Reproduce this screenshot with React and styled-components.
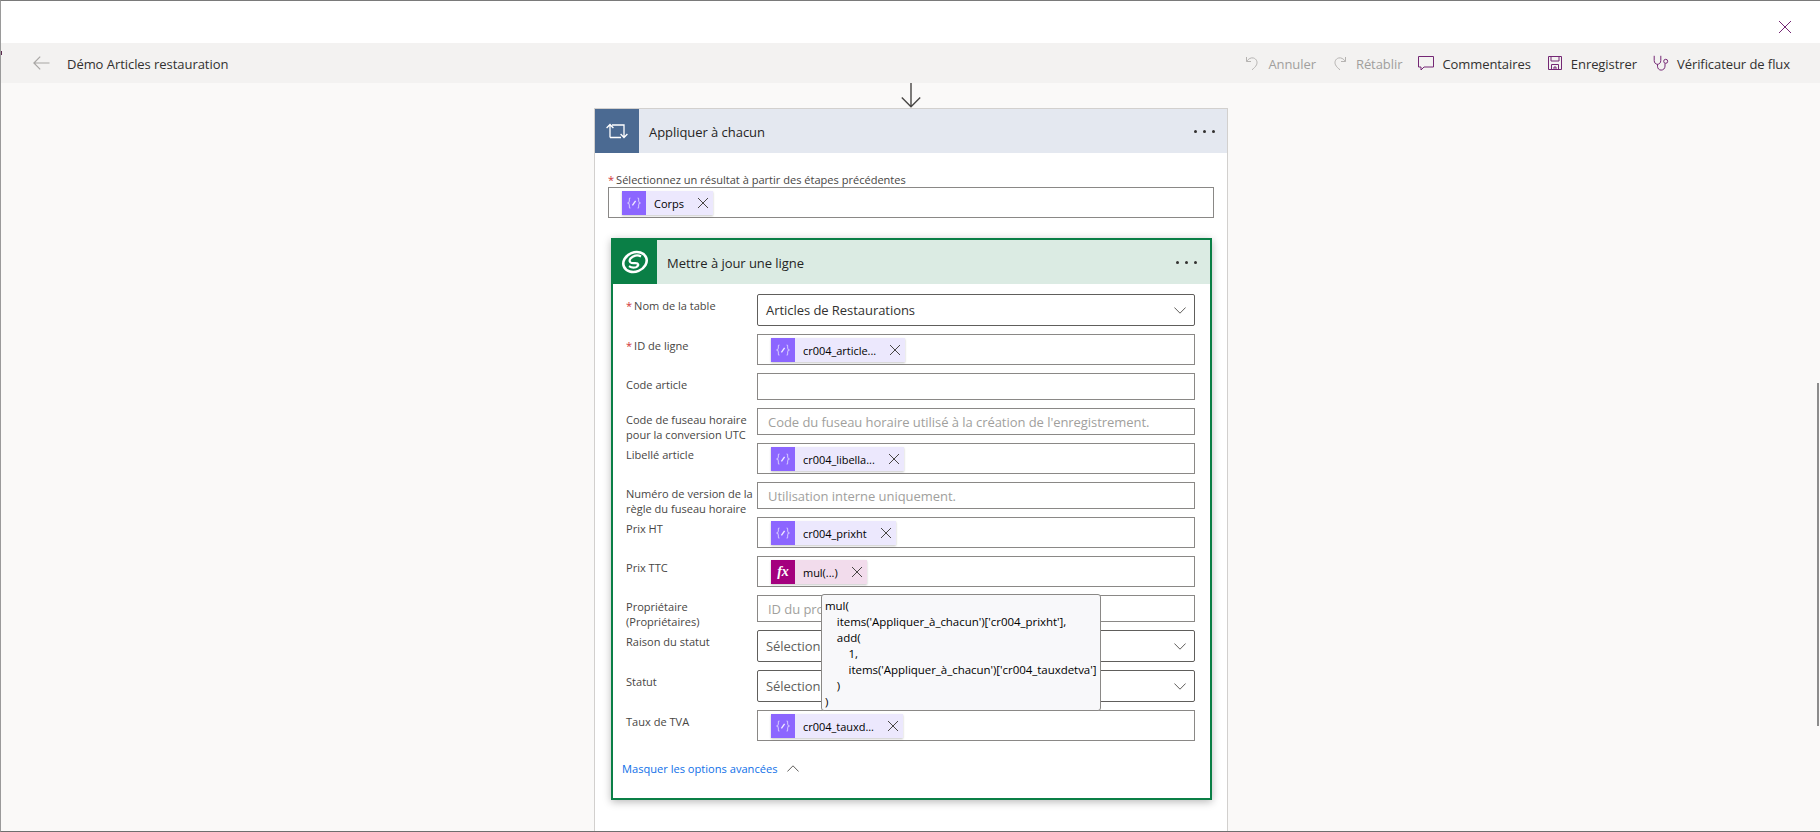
import React from 'react';
import styled, { createGlobalStyle } from 'styled-components';

const FONT = `"Open Sans", "Noto Sans", "Liberation Sans", sans-serif`;

const Global = createGlobalStyle`
  html, body { margin: 0; padding: 0; height: 100%; overflow: hidden; background: #faf9f8; }
  * { box-sizing: border-box; }
  body { font-family: ${FONT}; }
`;

const Frame = styled.div`
  position: relative;
  width: 1820px;
  height: 832px;
  display: flex;
  flex-direction: column;
  border-top: 1px solid #7a7a7a;
  border-left: 1px solid #9a9a9a;
  border-bottom: 1px solid #6e6e6e;
  background: #faf9f8;
  overflow: hidden;
`;
const CloseRow = styled.div`
  height: 42px;
  flex: none;
  background: #fff;
  display: flex;
  justify-content: flex-end;
  align-items: center;
  padding: 10px 29px 0 0;
`;
const EdgeMark = styled.span`
  position: absolute;
  left: -1px;
  top: 50px;
  width: 2px;
  height: 4px;
  background: #5b2a4e;
`;
const Toolbar = styled.header`
  height: 40px;
  flex: none;
  background: #f3f2f1;
  display: flex;
  align-items: center;
  justify-content: space-between;
  padding: 0 30px 0 32px;
`;
const ToolLeft = styled.div`
  display: flex;
  align-items: center;
  gap: 17px;
`;
const FlowTitle = styled.span`
  font-size: 13px;
  letter-spacing: -0.05px;
  color: #323130;
  padding-top: 2px;
`;
const ToolRight = styled.div`
  display: flex;
  align-items: center;
  gap: 16px;
`;
const ToolButton = styled.div`
  display: flex;
  align-items: center;
  gap: 8px;
  font-size: 13px;
  letter-spacing: -0.07px;
  color: ${p => (p.$disabled ? '#a19f9d' : '#323130')};
  & > span { padding-top: 2px; }
`;
const Canvas = styled.main`
  position: relative;
  flex: 1;
  min-height: 0;
  display: flex;
  flex-direction: column;
  align-items: center;
  background: #faf9f8;
  overflow: hidden;
  padding-left: 1px;
`;
const ScrollThumb = styled.div`
  position: absolute;
  right: 1px;
  top: 300px;
  width: 2px;
  height: 343px;
  background: #8c8c8c;
`;
const DownArrow = styled.svg`
  flex: none;
  display: block;
`;
const LoopCard = styled.section`
  width: 634px;
  flex: 1;
  background: #fff;
  border: 1px solid #d2d0ce;
  border-bottom: 0;
`;
const CardHeader = styled.div`
  height: 44px;
  display: flex;
  align-items: center;
  background: ${p => p.$bg};
`;
const CardIcon = styled.div`
  width: 44px;
  height: 44px;
  flex: none;
  display: flex;
  align-items: center;
  justify-content: center;
  background: ${p => p.$bg};
`;
const CardTitle = styled.div`
  flex: 1;
  padding: 2px 0 0 10px;
  font-size: 13px;
  letter-spacing: -0.05px;
  color: #252423;
`;
const MoreDots = styled.div`
  display: flex;
  gap: 6px;
  margin-right: ${p => p.$right}px;
  & > i { width: 3px; height: 3px; border-radius: 50%; background: #323130; display: block; }
`;
const LoopBody = styled.div`
  padding: 19px 13px 0 13px;
`;
const TopLabel = styled.div`
  font-size: 11.05px;
  line-height: 15px;
  height: 15px;
  color: #484644;
  white-space: nowrap;
`;
const Star = styled.span`
  color: #d13438;
  margin-right: 2px;
`;
const TokenBox = styled.div`
  height: 31px;
  border: 1px solid #8a8886;
  background: #fff;
  display: flex;
  align-items: center;
  padding: 1px 0 0 13px;
`;
const Chip = styled.div`
  height: 24px;
  display: flex;
  align-items: center;
  background: ${p => p.$bg};
  box-shadow: 0 1px 2px rgba(0, 0, 0, 0.22);
  padding-right: 5px;
`;
const ChipIcon = styled.div`
  width: 24px;
  height: 24px;
  flex: none;
  display: flex;
  align-items: center;
  justify-content: center;
  background: ${p => p.$bg};
`;
const FxMark = styled.span`
  font-family: "Liberation Serif", serif;
  font-style: italic;
  font-weight: 700;
  font-size: 14px;
  color: #fff;
`;
const ChipText = styled.span`
  margin: 0 14px 0 8px;
  font-size: 11px;
  letter-spacing: -0.03px;
  color: #000;
  white-space: nowrap;
`;
const ActionCard = styled.section`
  margin: 20px 2px 0 3px;
  border: 2px solid #0a7f46;
  background: #fff;
  box-shadow: 0 2px 8px rgba(0, 0, 0, 0.28);
`;
const Fields = styled.div`
  padding: 10px 15px 0 13px;
  display: flex;
  flex-direction: column;
  gap: 8px;
`;
const Row = styled.div`
  position: relative;
  display: flex;
  height: ${p => p.$h}px;
`;
const FieldLabel = styled.div`
  width: 131px;
  flex: none;
  padding-top: 4px;
  font-size: 11.05px;
  line-height: 15px;
  color: #484644;
  white-space: pre;
`;
const FieldControl = styled.div`
  flex: 1;
  min-width: 0;
`;
const TextBox = styled.div`
  height: 100%;
  border: 1px solid #8a8886;
  background: #fff;
  display: flex;
  align-items: center;
  padding-left: 10px;
  font-size: 13px;
  letter-spacing: -0.05px;
  color: #a19f9d;
  white-space: nowrap;
  overflow: hidden;
`;
const Dropdown = styled.div`
  height: 100%;
  border: 1px solid #605e5c;
  border-radius: 2px;
  background: #fff;
  display: flex;
  align-items: center;
  justify-content: space-between;
  padding: 0 8px 0 8px;
  font-size: 13px;
  letter-spacing: -0.05px;
  color: ${p => (p.$muted ? '#605e5c' : '#323130')};
`;
const Tooltip = styled.pre`
  position: absolute;
  z-index: 3;
  left: 195px;
  top: 38px;
  width: 280px;
  height: 117px;
  margin: 0;
  padding: 3px 0 0 3px;
  background: #f8f8fa;
  border: 1px solid #8a8886;
  border-radius: 3px;
  font-family: ${FONT};
  font-size: 11.5px;
  letter-spacing: -0.04px;
  line-height: 16px;
  color: #000;
  overflow: hidden;
`;
const Advanced = styled.div`
  height: 57px;
  display: flex;
  align-items: center;
  gap: 10px;
  padding: 0 0 3px 9px;
  font-size: 11.1px;
  color: #0f6fe8;
`;

const Stroke = ({ size = 16, color = '#742774', w = 1, children }) => (
  <svg width={size} height={size} viewBox="0 0 16 16" fill="none" stroke={color} strokeWidth={w}>
    {children}
  </svg>
);

const VarIcon = () => (
  <svg width="14" height="12" viewBox="0 0 14 12" fill="none" stroke="#cfc0ff" strokeWidth="1.1">
    <path d="M3.5 1C2 1 2.4 2.2 2.4 3.6 2.4 5 2 5.6 1 6c1 .4 1.4 1 1.4 2.4C2.4 9.8 2 11 3.5 11" />
    <path d="M10.5 1c1.5 0 1.1 1.2 1.1 2.6 0 1.4.4 2 1.4 2.4-1 .4-1.4 1-1.4 2.4 0 1.4.4 2.6-1.1 2.6" />
    <path d="M5.4 8.4 8.6 3.8" stroke="#f0eaff" strokeWidth="1.4" />
  </svg>
);
const Dismiss = () => (
  <svg width="10" height="10" viewBox="0 0 10 10" stroke="#484644" strokeWidth="1" style={{ flex: 'none' }}>
    <path d="M0 0l10 10M10 0L0 10" />
  </svg>
);
const Chevron = ({ up }) => (
  <svg width="12" height="7" viewBox="0 0 12 7" fill="none" stroke="#605e5c" strokeWidth="1">
    <path d={up ? 'M.4 6.5 6 .8l5.6 5.7' : 'M.4.5 6 6.2 11.6.5'} />
  </svg>
);
const Dots = ({ right }) => (
  <MoreDots $right={right}>
    <i />
    <i />
    <i />
  </MoreDots>
);

const Token = ({ text, fx }) => (
  <Chip $bg={fx ? '#f2dcec' : '#ece8fd'}>
    <ChipIcon $bg={fx ? '#a4007e' : '#8c66ff'}>{fx ? <FxMark>fx</FxMark> : <VarIcon />}</ChipIcon>
    <ChipText>{text}</ChipText>
    <Dismiss />
  </Chip>
);

const fields = [
  { label: 'Nom de la table', req: true, h: 32, select: 'Articles de Restaurations' },
  { label: 'ID de ligne', req: true, h: 31, token: 'cr004_article...' },
  { label: 'Code article', h: 27, text: '' },
  { label: 'Code de fuseau horaire\npour la conversion UTC', h: 27, text: "Code du fuseau horaire utilisé à la création de l'enregistrement." },
  { label: 'Libellé article', h: 31, token: 'cr004_libella...' },
  { label: 'Numéro de version de la\nrègle du fuseau horaire', h: 27, text: 'Utilisation interne uniquement.' },
  { label: 'Prix HT', h: 31, token: 'cr004_prixht' },
  { label: 'Prix TTC', h: 31, token: 'mul(...)', fx: true, tip: true },
  { label: 'Propriétaire\n(Propriétaires)', h: 27, text: 'ID du propriétaire' },
  { label: 'Raison du statut', h: 32, select: 'Sélectionner une valeur', muted: true },
  { label: 'Statut', h: 32, select: 'Sélectionner une valeur', muted: true },
  { label: 'Taux de TVA', h: 31, token: 'cr004_tauxd...' },
];

const formula = `mul(
    items('Appliquer_à_chacun')['cr004_prixht'],
    add(
        1,
        items('Appliquer_à_chacun')['cr004_tauxdetva']
    )
)`;

export default function App() {
  return (
    <Frame>
      <Global />
      <EdgeMark />
      <CloseRow>
        <svg width="12" height="12" viewBox="0 0 12 12" stroke="#742774" strokeWidth="1">
          <path d="M0 0l12 12M12 0L0 12" />
        </svg>
      </CloseRow>
      <Toolbar>
        <ToolLeft>
          <svg width="17" height="14" viewBox="0 0 17 14" fill="none" stroke="#a8a6a4" strokeWidth="1.2">
            <path d="M16.5 7H1M7.2.7 .9 7l6.3 6.3" />
          </svg>
          <FlowTitle>Démo Articles restauration</FlowTitle>
        </ToolLeft>
        <ToolRight>
          <ToolButton $disabled>
            <Stroke color="#b5b3b1">
              <path d="M2.5 2v4.5H7" />
              <path d="M2.6 6.3 C4.5 3.8 7 2.3 9.5 3 c3 .9 4.3 4 3 6.8-.9 2-2.8 3.6-4.5 5" />
            </Stroke>
            <span>Annuler</span>
          </ToolButton>
          <ToolButton $disabled>
            <Stroke color="#b5b3b1">
              <path d="M13.5 2v4.5H9" />
              <path d="M13.4 6.3 C11.5 3.8 9 2.3 6.5 3 c-3 .9-4.3 4-3 6.8.9 2 2.8 3.6 4.5 5" />
            </Stroke>
            <span>Rétablir</span>
          </ToolButton>
          <ToolButton>
            <Stroke>
              <path d="M.5 1.5h15v10.5H6l-3 3v-3H.5z" />
            </Stroke>
            <span>Commentaires</span>
          </ToolButton>
          <ToolButton>
            <Stroke>
              <path d="M1.5 1.5h13v13h-13z" />
              <path d="M4 1.5v4.5h8V1.5M4.5 14.5V9.5h7v5M7 14.5v-2.5h2v2.5" />
            </Stroke>
            <span>Enregistrer</span>
          </ToolButton>
          <ToolButton>
            <Stroke>
              <path d="M1.2 .8v4.7c0 2.3 1.5 3.8 3.3 3.8s3.3-1.5 3.3-3.8V.8" />
              <path d="M4.5 9.3v1.9c0 2.3 1.5 3.9 3.6 3.9 2.2 0 3.9-1.6 3.9-4V8.4" />
              <circle cx="12.7" cy="6.3" r="2" />
            </Stroke>
            <span>Vérificateur de flux</span>
          </ToolButton>
        </ToolRight>
      </Toolbar>
      <Canvas>
        <ScrollThumb />
        <DownArrow width="20" height="25" viewBox="0 0 20 25" fill="none" stroke="#484644" strokeWidth="1.4">
          <path d="M10 0v23.5M.8 14.6 10 23.8l9.2-9.2" />
        </DownArrow>
        <LoopCard>
          <CardHeader $bg="#e4e8f0">
            <CardIcon $bg="#4b6a92">
              <svg width="22" height="16" viewBox="0 0 22 16" fill="none" stroke="#fff" strokeWidth="1.3">
                <path d="M4 14.5V1.5M.6 5 4 1.5 7.4 5" />
                <path d="M4 14.5h11M6 2h12v12.5M14.6 11 18 14.5 21.4 11" />
              </svg>
            </CardIcon>
            <CardTitle>Appliquer à chacun</CardTitle>
            <Dots right={12} />
          </CardHeader>
          <LoopBody>
            <TopLabel>
              <Star>*</Star>Sélectionnez un résultat à partir des étapes précédentes
            </TopLabel>
            <TokenBox>
              <Token text="Corps" />
            </TokenBox>
            <ActionCard>
              <CardHeader $bg="#dbebe3">
                <CardIcon $bg="#0a7f46">
                  <svg width="28" height="24" viewBox="0 0 28 24" fill="none" stroke="#fff">
                    <ellipse cx="14" cy="12" rx="12" ry="9.6" strokeWidth="2.6" transform="rotate(-22 14 12)" />
                    <path d="M20 6.5C16.5 4.5 12 5.500 9.500 8.500c-1.500 2-1 4 1 4.500 2.500.5 4.500-.5 6 .5 1.500 1.200.5 3-1.500 3.700-2.500.8-5 .3-7-1" strokeWidth="2.200" />
                  </svg>
                </CardIcon>
                <CardTitle>Mettre à jour une ligne</CardTitle>
                <Dots right={13} />
              </CardHeader>
              <Fields>
                {fields.map(f => (
                  <Row key={f.label} $h={f.h}>
                    <FieldLabel>
                      {f.req && <Star>*</Star>}
                      {f.label}
                    </FieldLabel>
                    <FieldControl>
                      {f.select && (
                        <Dropdown $muted={f.muted}>
                          {f.select}
                          <Chevron />
                        </Dropdown>
                      )}
                      {f.token && (
                        <TokenBox>
                          <Token text={f.token} fx={f.fx} />
                        </TokenBox>
                      )}
                      {f.text !== undefined && <TextBox>{f.text}</TextBox>}
                    </FieldControl>
                    {f.tip && <Tooltip>{formula}</Tooltip>}
                  </Row>
                ))}
              </Fields>
              <Advanced>
                Masquer les options avancées
                <Chevron up />
              </Advanced>
            </ActionCard>
          </LoopBody>
        </LoopCard>
      </Canvas>
    </Frame>
  );
}
